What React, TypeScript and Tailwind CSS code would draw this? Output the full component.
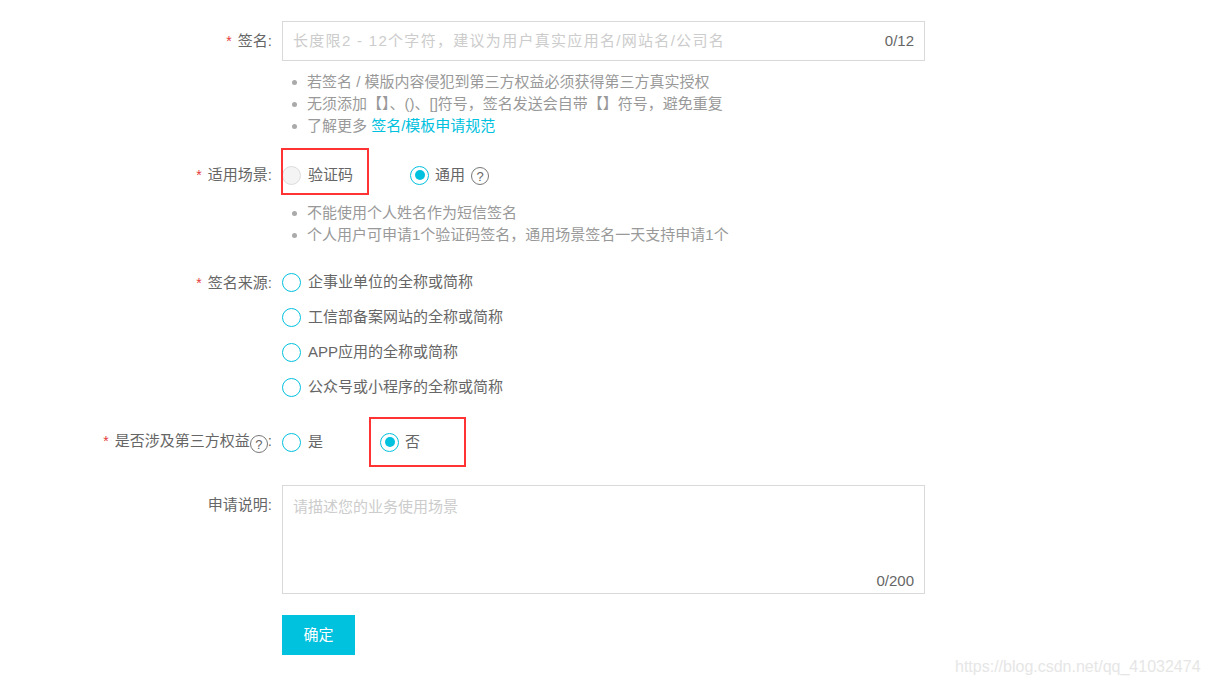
import type { ReactNode } from 'react'

const font = { fontFamily: '"Liberation Sans", "Noto Sans CJK SC", sans-serif' }

function Label({ children, required = true, top = false }: { children: ReactNode; required?: boolean; top?: boolean }) {
  return (
    <div
      className={`w-[282px] shrink-0 pr-[10px] text-right text-[15px] text-[#666] leading-[20px] ${top ? 'pt-[10px]' : ''}`}
    >
      {required && <span className="text-[#e4393c] mr-[6px] text-[14px]">*</span>}
      {children}
      <span>:</span>
    </div>
  )
}

function Help() {
  return (
    <span className="inline-flex items-center justify-center w-[18px] h-[18px] rounded-full border border-[#777] text-[13px] leading-none text-[#666] align-[-3px]">
      ?
    </span>
  )
}

function Radio({ checked = false, disabled = false }: { checked?: boolean; disabled?: boolean }) {
  if (disabled) {
    return <span className="w-[19px] h-[19px] rounded-full border border-[#dcdcdc] bg-[#f4f4f4] shrink-0" />
  }
  return (
    <span className="w-[19px] h-[19px] rounded-full border-[1.5px] border-[#00c1de] bg-white shrink-0 flex items-center justify-center">
      {checked && <span className="w-[10px] h-[10px] rounded-full bg-[#00c1de]" />}
    </span>
  )
}

function Hints({ items }: { items: ReactNode[] }) {
  return (
    <ul className="pl-[292px] text-[15px] leading-[22px] text-[#999]">
      {items.map((it, i) => (
        <li key={i} className="flex items-center">
          <span className="w-[5px] h-[5px] rounded-full bg-[#aaa] mr-[10px]" />
          <span>{it}</span>
        </li>
      ))}
    </ul>
  )
}

export default function App() {
  return (
    <div className="relative w-[1206px] h-[684px] bg-white overflow-hidden" style={font}>
      <div className="pt-[21px]">
        {/* 签名 */}
        <div className="flex items-center">
          <Label>签名</Label>
          <div className="w-[643px] h-[40px] border border-[#d9d9d9] flex items-center justify-between px-[10px] text-[15px]">
            <span className="text-[#ccc] tracking-[1.3px]">长度限2 - 12个字符，建议为用户真实应用名/网站名/公司名</span>
            <span className="text-[#666]">0/12</span>
          </div>
        </div>
        <div className="mt-[10px]">
          <Hints
            items={[
              '若签名 / 模版内容侵犯到第三方权益必须获得第三方真实授权',
              '无须添加【】、()、[]符号，签名发送会自带【】符号，避免重复',
              <>
                了解更多 <span className="text-[#00c1de]">签名/模板申请规范</span>
              </>,
            ]}
          />
        </div>

        {/* 适用场景 */}
        <div className="flex items-center h-[34px] mt-[21px]">
          <Label>适用场景</Label>
          <div className="flex items-center gap-[57px] text-[15px] text-[#666]">
            <div className="relative flex items-center gap-[7px] h-[20px]">
              <Radio disabled />
              <span>验证码</span>
              <span className="absolute -left-[1px] -top-[17px] -right-[16px] -bottom-[10px] border-2 border-[#f33]" />
            </div>
            <div className="flex items-center gap-[6px] h-[20px]">
              <Radio checked />
              <span>通用</span>
              <span className="-mt-[3px]">
                <Help />
              </span>
            </div>
          </div>
        </div>
        <div className="mt-[10px]">
          <Hints items={['不能使用个人姓名作为短信签名', '个人用户可申请1个验证码签名，通用场景签名一天支持申请1个']} />
        </div>

        {/* 签名来源 */}
        <div className="flex mt-[19px]">
          <div className="h-[35px] flex items-center">
            <Label>签名来源</Label>
          </div>
          <div className="flex flex-col text-[15px] text-[#666]">
            {['企事业单位的全称或简称', '工信部备案网站的全称或简称', 'APP应用的全称或简称', '公众号或小程序的全称或简称'].map(t => (
              <div key={t} className="h-[35px] flex items-center gap-[7px]">
                <Radio />
                <span>{t}</span>
              </div>
            ))}
          </div>
        </div>

        {/* 第三方权益 */}
        <div className="flex items-center h-[34px] mt-[20px]">
          <Label>
            是否涉及第三方权益
            <Help />
          </Label>
          <div className="flex items-center gap-[57px] text-[15px] text-[#666]">
            <div className="flex items-center gap-[7px] h-[20px]">
              <Radio />
              <span>是</span>
            </div>
            <div className="relative flex items-center gap-[6px] h-[20px]">
              <Radio checked />
              <span>否</span>
              <span className="absolute -left-[11px] -top-[15px] -right-[46px] -bottom-[15px] border-2 border-[#f33]" />
            </div>
          </div>
        </div>

        {/* 申请说明 */}
        <div className="flex mt-[26px]">
          <Label required={false} top>
            申请说明
          </Label>
          <div className="w-[643px] h-[109px] border border-[#d9d9d9] flex flex-col justify-between px-[10px] pt-[10px] pb-[1px] text-[15px]">
            <span className="text-[#ccc]">请描述您的业务使用场景</span>
            <span className="self-end text-[#666]">0/200</span>
          </div>
        </div>

        <div className="pl-[282px] mt-[21px]">
          <button className="w-[73px] h-[40px] bg-[#00c1de] text-white text-[15px]">确定</button>
        </div>
      </div>

      <div className="absolute left-[955px] top-[655px] text-[16px] text-[#e6e6e6]">https://blog.csdn.net/qq_41032474</div>
    </div>
  )
}
